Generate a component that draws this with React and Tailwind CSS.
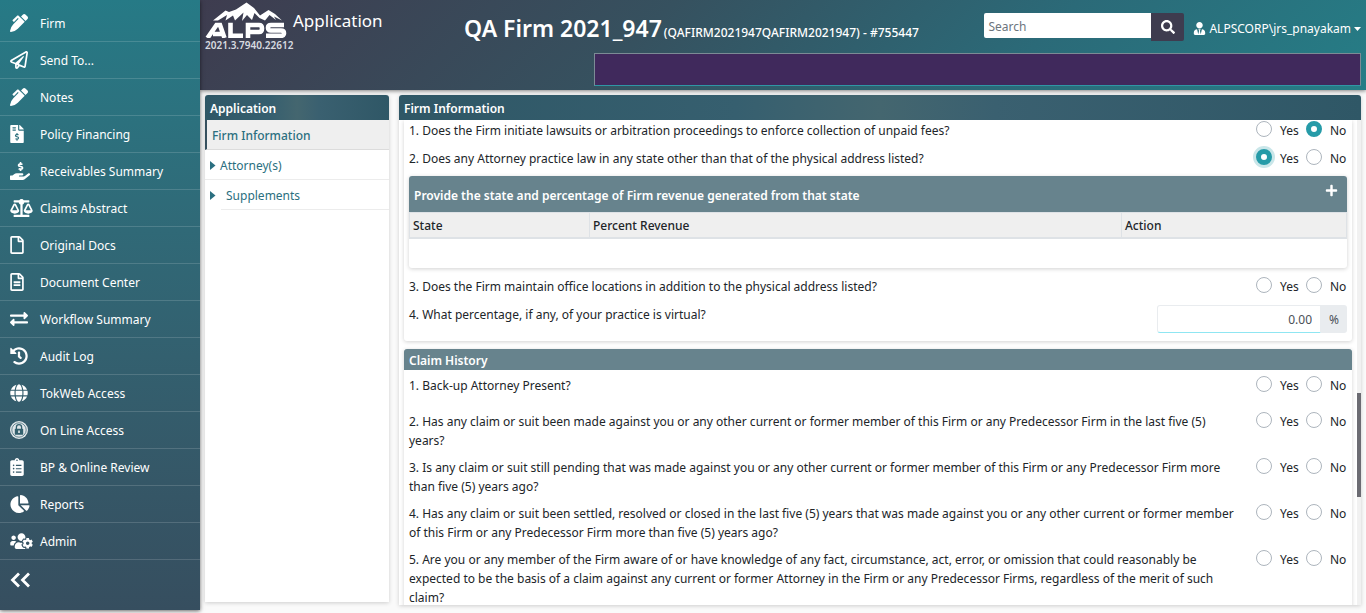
import React from "react";
import {
  FaPenAlt, FaRegPaperPlane, FaFileInvoiceDollar, FaHandHoldingUsd, FaBalanceScale, FaRegFile,
  FaRegFileAlt, FaExchangeAlt, FaHistory, FaGlobe, FaClipboardList, FaChartPie, FaUsersCog,
  FaSearch, FaUserTie, FaPlus,
} from "react-icons/fa";

function LockBadge({ className }) {
  return (
    <svg className={className} viewBox="0 0 18 18" aria-hidden="true">
      <circle cx="9" cy="9" r="9" fill="#fff" fillOpacity="0.85" />
      <circle cx="9" cy="9" r="7.2" fill="none" stroke="#32606d" strokeWidth="0.7" />
      <path d="M6.4 8V6.2a2.6 2.6 0 0 1 5.2 0V8" fill="none" stroke="#32606d" strokeWidth="1.3" />
      <rect x="4.8" y="7.8" width="8.4" height="6" rx="0.6" fill="#32606d" />
      <path d="M9 9.4v2.6" stroke="#fff" strokeWidth="1.4" />
    </svg>
  );
}

function TreeArrow() {
  return (
    <svg width="7" height="9" viewBox="0 0 7 9" fill="currentColor" aria-hidden="true"><path d="M0 0 5.500 4.500 0 9z" /></svg>
  );
}

const square = "h-[18px] w-[18px]";
const narrow = "h-[18px] w-[14px]";
const wide = "h-[18px] w-[23px]";

const menu = [
  ["Firm", FaPenAlt, square],
  ["Send To...", FaRegPaperPlane, square],
  ["Notes", FaPenAlt, square],
  ["Policy Financing", FaFileInvoiceDollar, narrow],
  ["Receivables Summary", FaHandHoldingUsd, "h-[18px] w-5"],
  ["Claims Abstract", FaBalanceScale, wide],
  ["Original Docs", FaRegFile, narrow],
  ["Document Center", FaRegFileAlt, narrow],
  ["Workflow Summary", FaExchangeAlt, square],
  ["Audit Log", FaHistory, square],
  ["TokWeb Access", FaGlobe, square],
  ["On Line Access", LockBadge, square],
  ["BP & Online Review", FaClipboardList, narrow],
  ["Reports", FaChartPie, "h-[18px] w-5"],
  ["Admin", FaUsersCog, wide],
];

function Sidebar() {
  return (
    <nav className="z-10 mb-[3px] flex w-[200px] shrink-0 flex-col bg-linear-to-b from-[#267a86] to-[#364e5f] pt-[5px] text-white shadow-[0_1px_4px_rgba(0,0,0,0.6)]">
      {menu.map(([label, Icon, size]) => (
        <a key={label} href="#" className="flex h-[37px] items-center border-b border-white/15 pl-[10px]">
          <span className="flex w-[30px] shrink-0 items-center"><Icon className={size} /></span>
          <span className="pt-[2px]">{label}</span>
        </a>
      ))}
      <button type="button" aria-label="Collapse menu" className="flex h-10 items-center pl-[10px]">
        <svg width="20" height="16" viewBox="0 0 20 16" fill="none" stroke="#fff" strokeWidth="2.8" aria-hidden="true">
          <path d="M9 1.5 2.5 8 9 14.5M19 1.5 12.5 8 19 14.5" />
        </svg>
      </button>
    </nav>
  );
}

function Logo() {
  return (
    <svg width="82" height="37" viewBox="0 0 82 37" fill="#fff" role="img" aria-label="ALPS">
      <path d="M8 19.500 20.500 9.500 24 11 31 8.500 41.500 1.500 49 7 55 14.500 63.500 9 70 13 77 19.500 69 15.500 71 19 64.500 14 60 19.500 54.500 17 49.500 12 47 19 42 14 37 20 38.500 11.500 30 19.500 28 14.500 20.500 19.500 22 14 13 19.500z" />
      <g fill="none" stroke="#fff" strokeWidth="4.600">
        <path d="M2.500 37 11.500 24h3.500L19.500 37M8 33h10" />
        <path d="M25.500 21.700v13h12.500" />
        <path d="M43 37V24h11q3 0 3 3.500t-3 3.500H43" />
        <path d="M79 24H66q-3 0-3 2.800t3 2.700h10q3 0 3 2.800t-3 2.400H61" />
      </g>
    </svg>
  );
}

function Header() {
  return (
    <header className="relative z-[5] flex h-[90px] shrink-0 bg-[linear-gradient(135deg,#3e3c4f_0%,#36515f_38%,#2b6a78_70%,#267d86_100%)] pr-[5px] pl-[5px] text-white shadow-[0_1px_4px_rgba(0,0,0,0.5)]">
      <div className="flex w-[259px] shrink-0 items-start gap-[6px] pt-px">
        <div className="w-[82px] whitespace-nowrap">
          <Logo />
          <div className="text-[10px] leading-[14px] font-semibold text-[#d8dbe0]">2021.3.7940.22612</div>
        </div>
        <div className="pt-[6px] text-[17px] leading-7">Application</div>
      </div>
      <h1 className="flex items-baseline gap-[2px] self-start pt-[12px] text-[23px] leading-8 font-semibold whitespace-nowrap">
        QA Firm 2021_947
        <span className="text-[12px] font-medium">(QAFIRM2021947QAFIRM2021947) - #755447</span>
      </h1>
      <div className="ml-auto flex items-start pt-[13px]">
        <input aria-label="Search" placeholder="Search" className="h-[25px] w-[167px] rounded-l-xs bg-white px-1 pt-[2px] text-gray-700 placeholder:text-[#6c757d]" />
        <button type="button" aria-label="Search" className="flex h-7 w-[33px] items-center justify-center rounded-r-xs bg-[#3e3c4f] text-[14px]"><FaSearch /></button>
        <button type="button" className="ml-[9px] flex h-[31px] items-center gap-[3px] whitespace-nowrap">
          <FaUserTie className="size-[13px]" />ALPSCORP\jrs_pnayakam
          <svg width="7" height="4" viewBox="0 0 7 4" fill="currentColor" aria-hidden="true"><path d="M0 0h7L3.500 4z" /></svg>
        </button>
      </div>
      <div className="absolute top-[53px] right-[5px] h-[33px] w-[767px] border border-[#7c8b95] border-b-[#2f97a5] bg-[#40295c]" />
    </header>
  );
}

const panelHead = "h-[25px] shrink-0 rounded-t-[3px] bg-[linear-gradient(90deg,#2f5766_0%,#365f6f_35%,#44666f_50%,#3a6070_62%,#2f5766_100%)] px-[5px] leading-[27px] font-semibold text-white";

function Tree() {
  return (
    <aside className="mb-[11px] flex w-[184px] shrink-0 flex-col rounded-t-[3px] bg-white text-[#2b6f80] shadow-[0_1px_4px_rgba(0,0,0,0.18)]">
      <h2 className={panelHead}>Application</h2>
      <a href="#" className="flex h-[30px] items-center border-b border-l-2 border-b-[#dcdcdc] border-l-[#36515f] bg-[#efefef] pt-[2px] pl-[5px] font-medium">Firm Information</a>
      <a href="#" className="flex h-[30px] items-center gap-[3px] border-b border-[#ececec] pt-[2px] pl-[5px]"><TreeArrow />Attorney(s)</a>
      <a href="#" className="flex h-[30px] items-center pl-[5px]"><TreeArrow /><span className="ml-1 flex h-full flex-1 items-center border-b border-[#ececec] pt-[2px] pl-[5px]">Supplements</span></a>
    </aside>
  );
}

function Choice({ name, value }) {
  return (
    <div className="flex h-4 shrink-0 items-center">
      {["Yes", "No"].map((option) => (
        <label key={option} className="flex w-[50px] items-center gap-2 last:w-[41px]">
          <input
            type="radio"
            name={name}
            defaultChecked={value === option}
            className={
              "size-4 shrink-0 appearance-none rounded-full border border-[#adb5bd] bg-white checked:border-[5px] checked:border-[#269ba8]" +
              (name === "f2" && option === "Yes" ? " shadow-[0_0_0_3px_#c9e6e9]" : "")
            }
          />
          <span className="pt-1">{option}</span>
        </label>
      ))}
    </div>
  );
}

function Question({ name, value, children, tall }) {
  return (
    <div role="radiogroup" className={"flex shrink-0 items-start justify-between " + (tall ? "min-h-9 pb-2" : "h-7")}>
      <p className="max-w-[828px] leading-[19px]">{children}</p>
      <Choice name={name} value={value} />
    </div>
  );
}

function FirmCard() {
  return (
    <section className="flex shrink-0 flex-col rounded-b-[3px] bg-white px-[5px] pt-px pb-2 shadow-[0_1px_4px_rgba(0,0,0,0.18)]">
      <Question name="f1" value="No">1. Does the Firm initiate lawsuits or arbitration proceedings to enforce collection of unpaid fees?</Question>
      <Question name="f2" value="Yes">2. Does any Attorney practice law in any state other than that of the physical address listed?</Question>
      <div className="mt-[-1px] mb-[9px] rounded-[3px] shadow-[0_1px_4px_rgba(0,0,0,0.18)]">
        <div className="flex h-9 items-start justify-between rounded-t-[3px] bg-[#67838d] pl-[5px] text-white">
          <h3 className="leading-[39px] font-semibold">Provide the state and percentage of Firm revenue generated from that state</h3>
          <button type="button" aria-label="Add state" className="p-2 pr-[9px] text-[13px]"><FaPlus /></button>
        </div>
        <table className="w-full table-fixed border-collapse text-left">
          <thead>
            <tr className="h-[25px] border border-b-2 border-[#dee2e6] bg-[#efefef]">
              <th className="w-[180px] px-[3px] pt-[2px] font-medium">State</th>
              <th className="border-l border-[#dee2e6] px-[3px] pt-[2px] font-medium">Percent Revenue</th>
              <th className="w-[225px] border-l border-[#dee2e6] px-[3px] pt-[2px] font-medium">Action</th>
            </tr>
          </thead>
          <tbody><tr className="h-[30px]"><td colSpan={3} /></tr></tbody>
        </table>
      </div>
      <Question name="f3">3. Does the Firm maintain office locations in addition to the physical address listed?</Question>
      <div className="flex items-start justify-between">
        <label htmlFor="virtual" className="leading-[19px]">4. What percentage, if any, of your practice is virtual?</label>
        <div className="flex h-7">
          <input id="virtual" defaultValue="0.00" className="w-[164px] rounded-l-[3px] border border-[#e9ecef] border-b-[#8fe6f2] px-2 pt-[3px] text-right text-[#495057]" />
          <span className="flex w-[26px] items-center justify-center rounded-r-[3px] bg-[#e9ecef] pt-[2px] text-[#495057]">%</span>
        </div>
      </div>
    </section>
  );
}

function ClaimCard() {
  return (
    <section className="mt-2 shrink-0 bg-white shadow-[0_1px_4px_rgba(0,0,0,0.18)]">
      <h3 className="h-[21px] rounded-t-[3px] bg-[#67838d] px-[5px] leading-[23px] font-semibold text-white">Claim History</h3>
      <div className="px-[5px] pt-[6px]">
        <Question tall name="c1">1. Back-up Attorney Present?</Question>
        <Question tall name="c2">2. Has any claim or suit been made against you or any other current or former member of this Firm or any Predecessor Firm in the last five (5) years?</Question>
        <Question tall name="c3">3. Is any claim or suit still pending that was made against you or any other current or former member of this Firm or any Predecessor Firm more than five (5) years ago?</Question>
        <Question tall name="c4">4. Has any claim or suit been settled, resolved or closed in the last five (5) years that was made against you or any other current or former member of this Firm or any Predecessor Firm more than five (5) years ago?</Question>
        <Question tall name="c5">5. Are you or any member of the Firm aware of or have knowledge of any fact, circumstance, act, error, or omission that could reasonably be expected to be the basis of a claim against any current or former Attorney in the Firm or any Predecessor Firms, regardless of the merit of such claim?</Question>
      </div>
    </section>
  );
}

export default function App() {
  return (
    <div className="flex h-screen overflow-hidden bg-[#fafafa] font-['Noto_Sans','Open_Sans',sans-serif] text-[12px] leading-[18px] text-[#212529]">
      <Sidebar />
      <div className="flex min-w-0 flex-1 flex-col">
        <Header />
        <div className="flex min-h-0 flex-1 gap-[10px] px-[5px] pt-[5px]">
          <Tree />
          <main className="mb-2 flex min-w-0 flex-1 flex-col rounded-t-[3px] bg-white shadow-[0_1px_4px_rgba(0,0,0,0.18)]">
            <h2 className={panelHead}>Firm Information</h2>
            <div className="flex min-h-0 flex-1">
              <div className="flex min-w-0 flex-1 flex-col overflow-hidden px-[5px]">
                <FirmCard />
                <ClaimCard />
              </div>
              <div className="w-1 bg-[#f1f1f1] pt-[273px]"><div className="h-[104px] bg-[#6b6b72]" /></div>
            </div>
          </main>
        </div>
      </div>
    </div>
  );
}
